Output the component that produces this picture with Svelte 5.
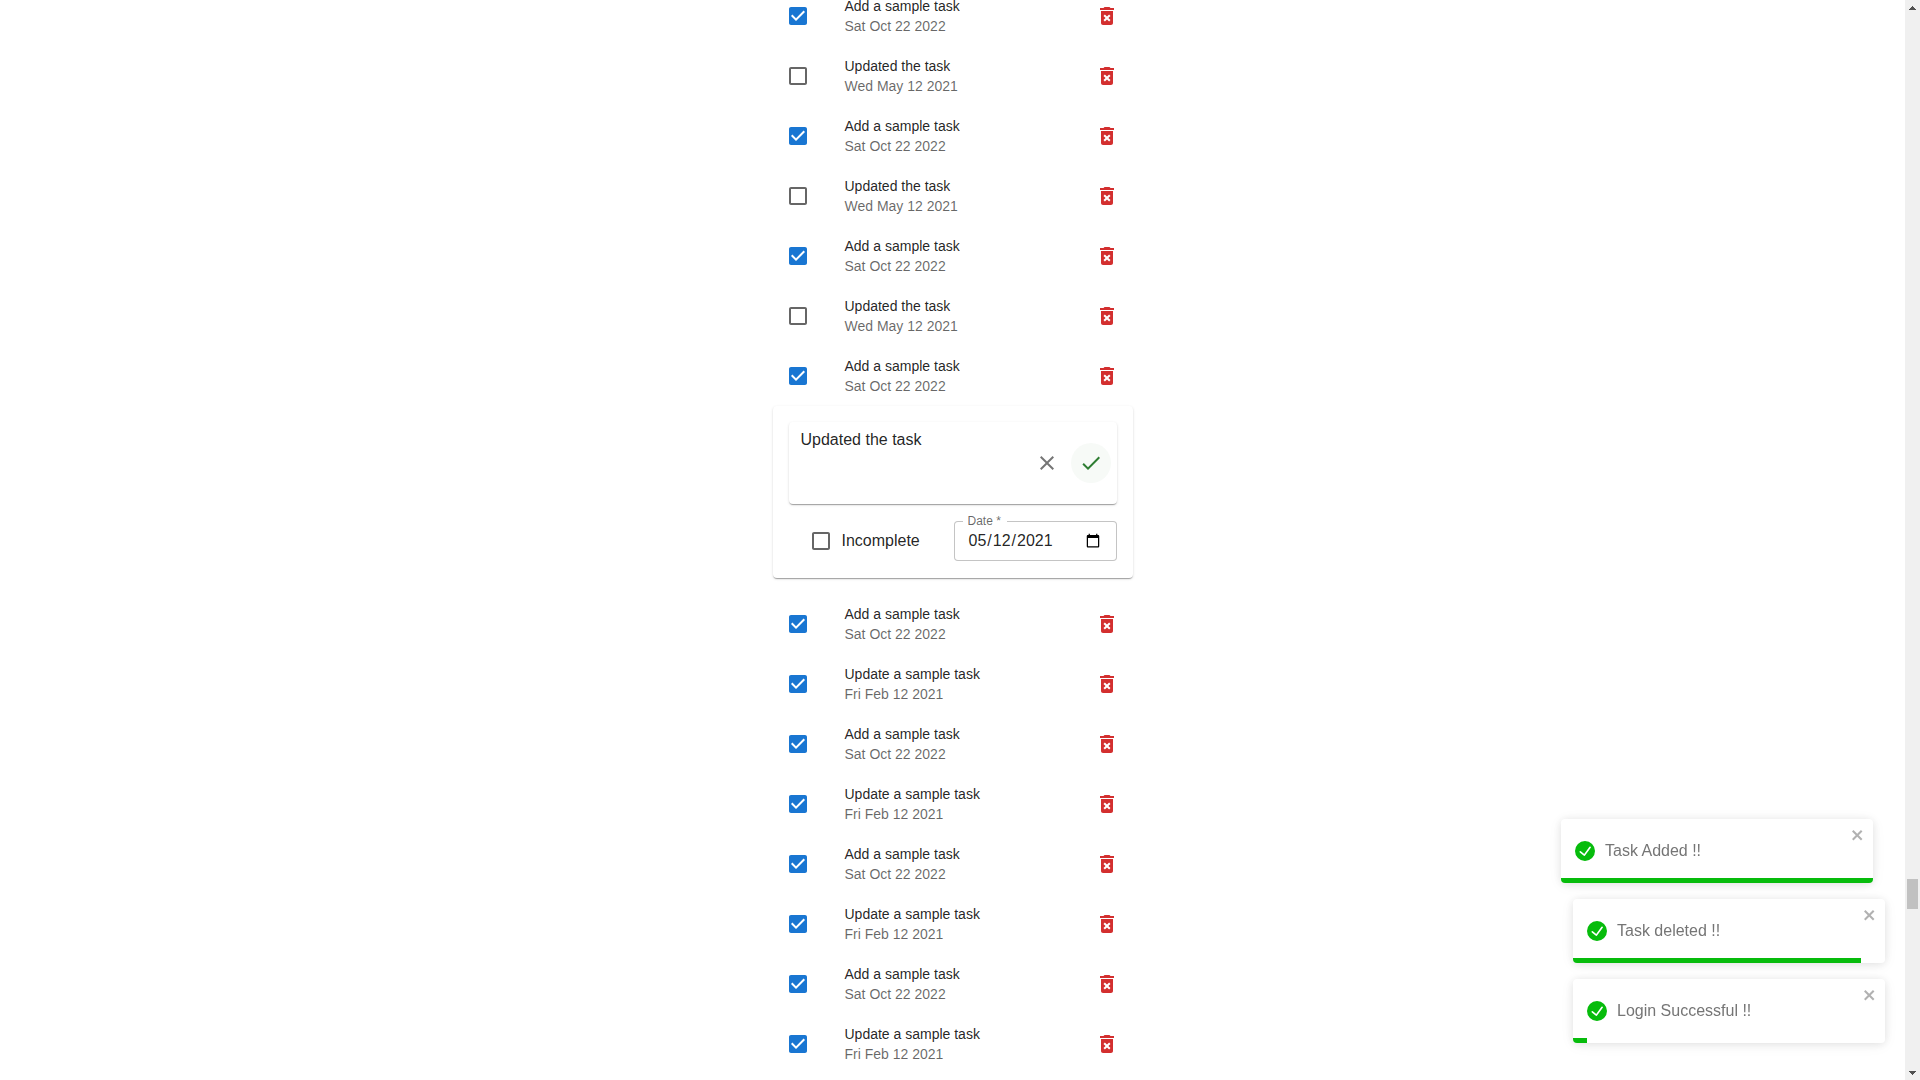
<script>
  const sample = { title: 'Add a sample task', date: 'Sat Oct 22 2022', done: true };
  const updated = { title: 'Updated the task', date: 'Wed May 12 2021', done: false };
  const february = { title: 'Update a sample task', date: 'Fri Feb 12 2021', done: true };

  let before = $state([sample, updated, sample, updated, sample, updated, sample].map((t) => ({ ...t })));
  let after = $state([sample, february, sample, february, sample, february, sample, february].map((t) => ({ ...t })));

  let draft = $state('Updated the task');
  let complete = $state(false);
  let date = $state('2021-05-12');

  let toasts = $state([
    { text: 'Task Added !!', progress: 100, entering: true },
    { text: 'Task deleted !!', progress: 92.3, entering: false },
    { text: 'Login Successful !!', progress: 4.4, entering: false }
  ]);
</script>

{#snippet tick(checked)}
  <svg class="icon" class:on={checked} viewBox="0 0 24 24" aria-hidden="true">
    {#if checked}
      <path d="M19 3H5c-1.11 0-2 .9-2 2v14c0 1.1.89 2 2 2h14c1.11 0 2-.9 2-2V5c0-1.1-.89-2-2-2zm-9 14l-5-5 1.41-1.41L10 14.17l7.59-7.59L19 8l-9 9z" />
    {:else}
      <path d="M19 5v14H5V5h14m0-2H5c-1.1 0-2 .9-2 2v14c0 1.1.9 2 2 2h14c1.1 0 2-.9 2-2V5c0-1.1-.9-2-2-2z" />
    {/if}
  </svg>
{/snippet}

{#snippet rows(tasks, key)}
  <ul>
    {#each tasks as task, i}
      <li>
        <span class="check">
          <input type="checkbox" id="{key}-{i}" bind:checked={task.done} />
          {@render tick(task.done)}
        </span>
        <label class="text" for="{key}-{i}">
          <span class="title">{task.title}</span>
          <span class="date">{task.date}</span>
        </label>
        <button class="delete" type="button" aria-label="Delete task">
          <svg class="icon" viewBox="0 0 24 24" aria-hidden="true">
            <path d="M6 19c0 1.1.9 2 2 2h8c1.1 0 2-.9 2-2V7H6v12zm2.46-7.12 1.41-1.41L12 12.59l2.12-2.12 1.41 1.41L13.41 14l2.12 2.12-1.41 1.41L12 15.41l-2.12 2.12-1.41-1.41L10.59 14l-2.13-2.12zM15.5 4l-1-1h-5l-1 1H5v2h14V4z" />
          </svg>
        </button>
      </li>
    {/each}
  </ul>
{/snippet}

<div class="page">
  <main>
    <div class="list">
      {@render rows(before, 'before')}

      <form class="card">
        <div class="editor">
          <textarea aria-label="Task" bind:value={draft}></textarea>
          <button class="round cancel" type="button" aria-label="Cancel">
            <svg class="icon" viewBox="0 0 24 24" aria-hidden="true">
              <path d="M19 6.41 17.59 5 12 10.59 6.41 5 5 6.41 10.59 12 5 17.59 6.41 19 12 13.41 17.59 19 19 17.59 13.41 12z" />
            </svg>
          </button>
          <button class="round save" type="button" aria-label="Save">
            <svg class="icon" viewBox="0 0 24 24" aria-hidden="true">
              <path d="M9 16.17 4.83 12l-1.42 1.41L9 19 21 7l-1.41-1.41z" />
            </svg>
          </button>
        </div>
        <div class="controls">
          <label class="status">
            <span class="check">
              <input type="checkbox" bind:checked={complete} />
              {@render tick(complete)}
            </span>
            {complete ? 'Complete' : 'Incomplete'}
          </label>
          <div class="field">
            <label for="due">Date *</label>
            <input id="due" type="date" required bind:value={date} />
          </div>
        </div>
      </form>

      {@render rows(after, 'after')}
    </div>
  </main>

  <div class="scrollbar" aria-hidden="true">
    <svg viewBox="0 0 7 4" shape-rendering="crispEdges"><path d="M3 0h1v1h1v1h1v1h1v1H0V3h1V2h1V1h1z" /></svg>
    <div class="track"><div class="thumb"></div></div>
    <svg viewBox="0 0 7 4" shape-rendering="crispEdges"><path d="M0 0h7v1H6v1H5v1H4v1H3V3H2V2H1V1H0z" /></svg>
  </div>
</div>

<div class="toasts">
  {#each toasts as toast}
    <div class="toast" class:entering={toast.entering} role="alert">
      <svg class="success" viewBox="0 0 24 24" aria-hidden="true">
        <path d="M12 0a12 12 0 1012 12A12.014 12.014 0 0012 0zm6.927 8.2l-6.845 9.289a1.011 1.011 0 01-1.43.188l-4.888-3.908a1 1 0 111.25-1.562l4.076 3.261 6.227-8.451a1 1 0 111.61 1.183z" />
      </svg>
      <span class="message">{toast.text}</span>
      <button class="close" type="button" aria-label="close">
        <svg viewBox="0 0 14 16" aria-hidden="true">
          <path fill-rule="evenodd" d="M7.71 8.23l3.75 3.75-1.48 1.48-3.75-3.75-3.75 3.75L1 11.98l3.75-3.75L1 4.48 2.48 3l3.75 3.75L9.98 3l1.48 1.48-3.75 3.75z" />
        </svg>
      </button>
      <div class="progress" style:width="{toast.progress}%"></div>
    </div>
  {/each}
</div>

<style>
  :global(body) {
    background: #fff;
    color: rgba(0, 0, 0, 0.87);
    font-family: "Liberation Sans", Arial, sans-serif;
    font-size: 16px;
  }

  * {
    box-sizing: border-box;
  }

  button {
    padding: 0;
    border: 0;
    background: none;
    cursor: pointer;
  }

  .page {
    display: flex;
    height: 100vh;
    overflow: hidden;
  }

  main {
    flex: 1;
    display: flex;
    justify-content: center;
    align-items: flex-start;
  }

  .list {
    width: 360px;
    margin-top: -14px;
  }

  ul {
    margin: 0;
    padding: 0;
    list-style: none;
  }

  li {
    display: flex;
    align-items: center;
    height: 60px;
    padding: 0 14px 0 13px;
  }

  .icon {
    display: block;
    width: 24px;
    height: 24px;
    fill: currentColor;
  }

  .check {
    display: grid;
    flex: none;
    color: rgba(0, 0, 0, 0.6);
  }

  .check > * {
    grid-area: 1 / 1;
  }

  .check input {
    margin: 0;
    opacity: 0;
    cursor: pointer;
  }

  .icon.on {
    color: #1976d2;
  }

  .text {
    flex: 1;
    margin-left: 35px;
    font-size: 14px;
    line-height: 20px;
  }

  .text span {
    display: block;
  }

  .text .date {
    color: rgba(0, 0, 0, 0.6);
  }

  .delete {
    color: #d32f2f;
  }

  .card,
  .editor {
    border-radius: 4px;
    background: #fff;
    box-shadow:
      0 2px 1px -1px rgba(0, 0, 0, 0.2),
      0 1px 1px 0 rgba(0, 0, 0, 0.14),
      0 1px 3px 0 rgba(0, 0, 0, 0.12);
  }

  .card {
    margin-bottom: 16px;
    padding: 16px 16px 17px;
  }

  .editor {
    display: flex;
    align-items: center;
    gap: 4px;
    height: 82px;
    padding-right: 6px;
  }

  textarea {
    flex: 1;
    min-width: 0;
    height: 100%;
    padding: 6px 12px;
    border: 0;
    outline: 0;
    resize: none;
    background: none;
    color: inherit;
    font: inherit;
    line-height: 23px;
  }

  .round {
    display: grid;
    place-items: center;
    width: 40px;
    height: 40px;
    border-radius: 50%;
  }

  .cancel {
    color: rgba(0, 0, 0, 0.54);
  }

  .save {
    background: rgba(46, 125, 50, 0.04);
    color: #2e7d32;
  }

  .controls {
    display: flex;
    align-items: center;
    justify-content: space-between;
    margin-top: 17px;
  }

  .status {
    display: flex;
    align-items: center;
    gap: 9px;
    padding-left: 20px;
  }

  .field {
    position: relative;
    width: 163px;
  }

  .field input {
    display: block;
    width: 100%;
    height: 40px;
    padding: 0 13px;
    border: 1px solid rgba(0, 0, 0, 0.23);
    border-radius: 4px;
    background: #fff;
    color: inherit;
    font: inherit;
  }

  .field label {
    position: absolute;
    top: -8px;
    left: 9px;
    padding: 0 6px 0 5px;
    background: #fff;
    color: rgba(0, 0, 0, 0.6);
    font-size: 12px;
    line-height: 16px;
  }

  .scrollbar {
    display: flex;
    flex-direction: column;
    align-items: center;
    width: 15px;
    padding: 6px 0 5px;
    background: #f0f0f0;
  }

  .scrollbar svg {
    width: 7px;
    height: 4px;
    fill: #505050;
  }

  .track {
    flex: 1;
    display: flex;
    flex-direction: column;
    width: 11px;
  }

  .track::before {
    content: "";
    flex: 869;
  }

  .track::after {
    content: "";
    flex: 162;
  }

  .thumb {
    height: 30px;
    background: #c1c1c1;
  }

  .toasts {
    position: fixed;
    right: 35px;
    bottom: 37px;
    display: flex;
    flex-direction: column;
    gap: 16px;
    width: 312px;
  }

  .toast {
    position: relative;
    display: flex;
    align-items: center;
    gap: 10px;
    height: 64px;
    padding: 0 8px 0 14px;
    border-radius: 4px;
    overflow: hidden;
    background: #fff;
    box-shadow:
      0 1px 10px 0 rgba(0, 0, 0, 0.1),
      0 2px 15px 0 rgba(0, 0, 0, 0.05);
    color: #757575;
  }

  .entering {
    margin: 0 12px 0 -12px;
  }

  .success {
    flex: none;
    width: 20px;
    height: 20px;
    fill: #07bc0c;
  }

  .message {
    flex: 1;
  }

  .close {
    align-self: flex-start;
    margin-top: 8px;
    opacity: 0.3;
  }

  .close svg {
    display: block;
    width: 14px;
    height: 16px;
  }

  .progress {
    position: absolute;
    bottom: 0;
    left: 0;
    height: 5px;
    background: #07bc0c;
  }
</style>
